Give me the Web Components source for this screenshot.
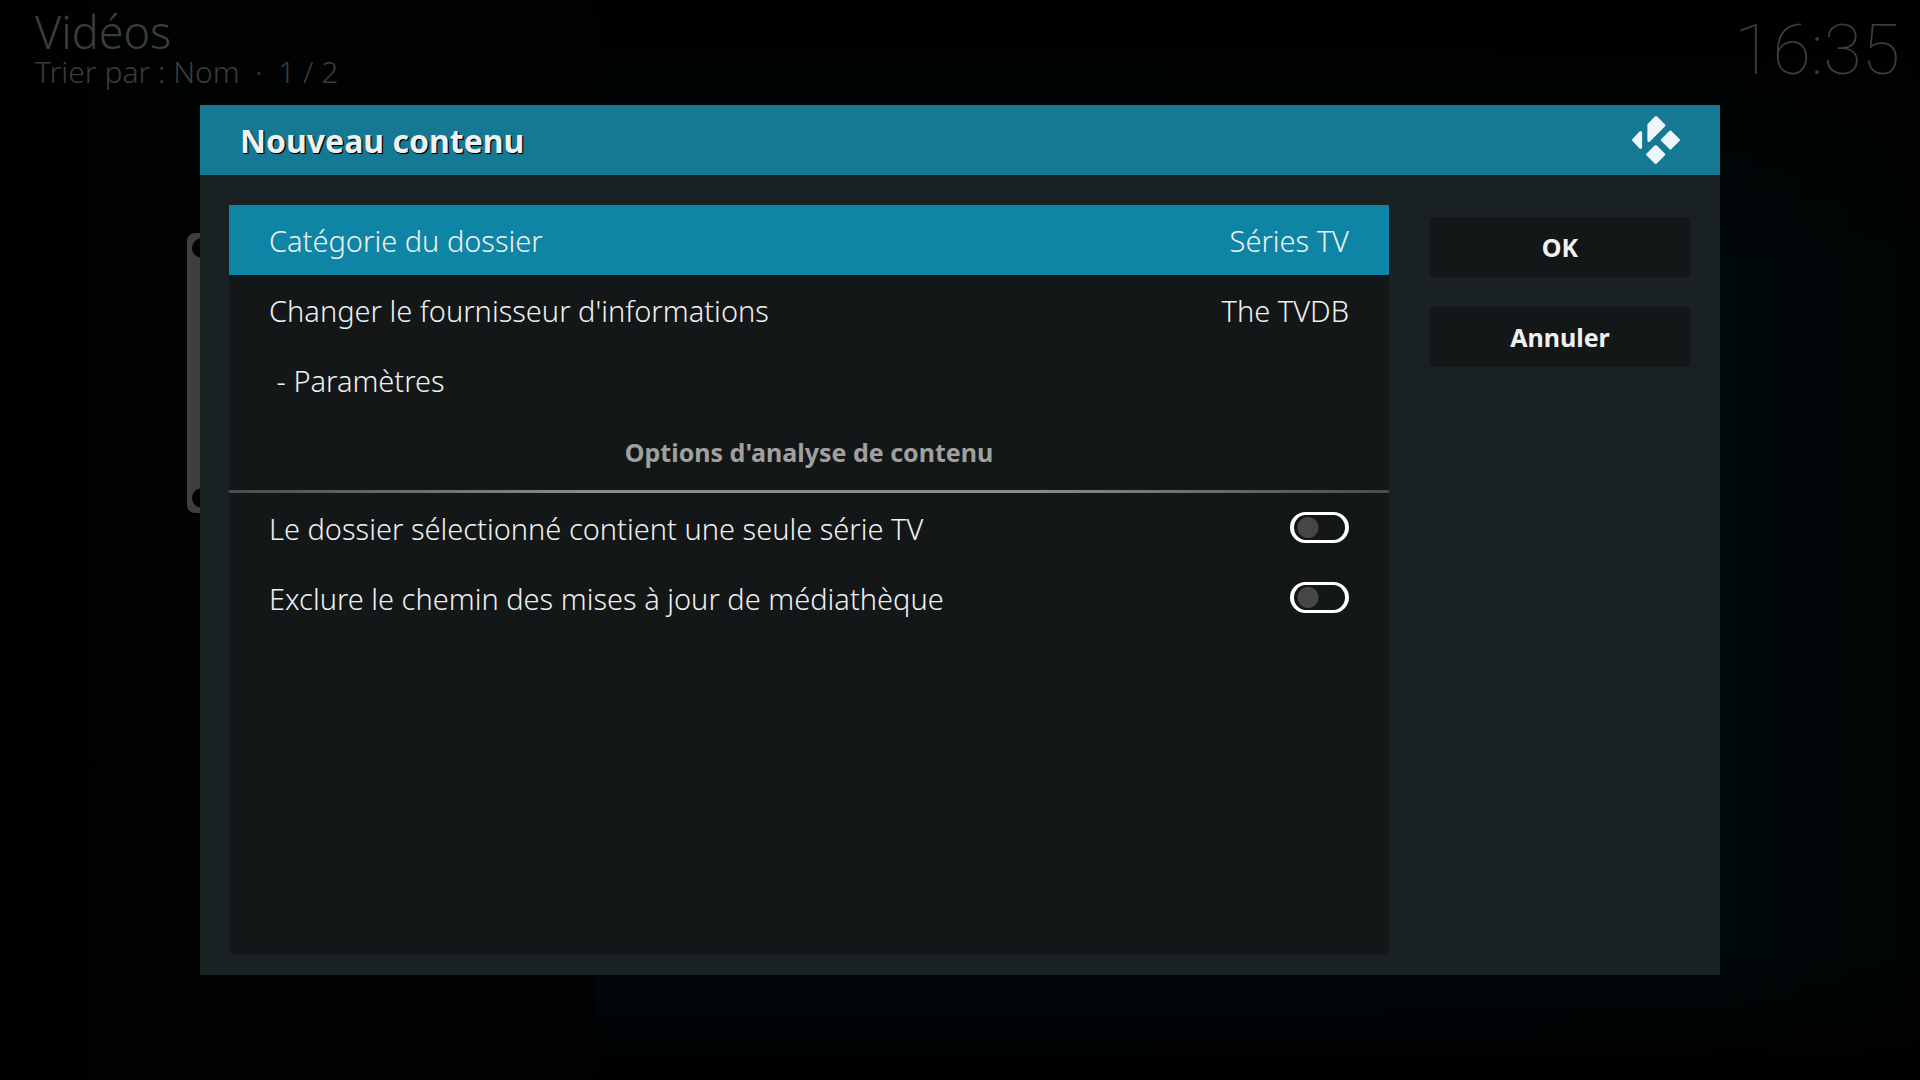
<!DOCTYPE html>
<html lang="fr">
<head>
<meta charset="utf-8">
<title>Nouveau contenu</title>
<style>
  html, body {
    height: 100%;
    margin: 0;
  }

  body {
    background: #000;
    color: #f0f0f0;
    font-family: "Noto Sans", "Open Sans", sans-serif;
    font-weight: 300;
    font-size: 29px;
    line-height: 40px;
  }
</style>
</head>
<body>

<media-window>
  <span slot="title">Vidéos</span>
  <span slot="details">Trier par : Nom &nbsp;·&nbsp; 1 / 2</span>
  <time slot="clock">16:35</time>

  <content-dialog slot="dialog" role="dialog" aria-label="Nouveau contenu">
    <span slot="heading">Nouveau contenu</span>

    <setting-row selected>Catégorie du dossier<span slot="value">Séries TV</span></setting-row>
    <setting-row>Changer le fournisseur d'informations<span slot="value">The TVDB</span></setting-row>
    <setting-row>&nbsp;- Paramètres</setting-row>
    <setting-group>Options d'analyse de contenu</setting-group>
    <setting-toggle>Le dossier sélectionné contient une seule série TV</setting-toggle>
    <setting-toggle>Exclure le chemin des mises à jour de médiathèque</setting-toggle>

    <dialog-button slot="actions">OK</dialog-button>
    <dialog-button slot="actions">Annuler</dialog-button>
  </content-dialog>
</media-window>

<template id="media-window">
  <style>
    :host {
      display: flex;
      flex-direction: column;
      position: relative;
      min-height: 100%;
      background:
        linear-gradient(90deg, #000 0, #010303 12%, #010202 31%, transparent 31%),
        linear-gradient(#000, transparent 25%, transparent 88%, #000),
        linear-gradient(90deg, #00090d 60%, #00080a 90%, #010404);
    }

    header {
      display: flex;
      justify-content: space-between;
      padding: 8px 20px 0 35px;
      color: #3c3c3c;
    }

    h1 {
      margin: 0;
      font-size: 45px;
      font-weight: 300;
      line-height: 48px;
    }

    p {
      margin: 0;
      font-size: 30px;
      line-height: 32px;
    }

    .clock {
      padding-top: 4px;
      font-family: Roboto, sans-serif;
      font-size: 70px;
      font-weight: 100;
      line-height: 76px;
    }

    .folder {
      width: 280px;
      height: 280px;
      margin: 145px 0 0 187px;
    }

    .layer {
      position: absolute;
      inset: 0;
      display: flex;
      padding: 105px 200px;
    }

    ::slotted(content-dialog) {
      flex: 1;
    }
  </style>

  <header>
    <div>
      <h1><slot name="title"></slot></h1>
      <p><slot name="details"></slot></p>
    </div>
    <div class="clock"><slot name="clock"></slot></div>
  </header>

  <svg class="folder" viewBox="0 0 280 280" aria-hidden="true">
    <rect width="280" height="280" rx="8" fill="#3e3e3e"/>
    <g fill="#020303">
      <circle cx="15" cy="15" r="10"/>
      <circle cx="15" cy="265" r="10"/>
      <circle cx="265" cy="15" r="10"/>
      <circle cx="265" cy="265" r="10"/>
    </g>
  </svg>

  <div class="layer"><slot name="dialog"></slot></div>
</template>

<template id="content-dialog">
  <style>
    :host {
      display: flex;
      flex-direction: column;
      background: #1a2123;
    }

    header {
      display: flex;
      align-items: center;
      justify-content: space-between;
      height: 70px;
      padding: 0 40px;
      background: #157994;
    }

    h2 {
      margin: 0;
      padding-top: 2px;
      font-size: 32px;
      font-weight: 700;
      text-shadow: 1px 1px 1px #000, 1px 1px 0 #000;
    }

    svg {
      width: 48px;
      height: 48px;
      fill: #eef6f9;
      stroke: #eef6f9;
      stroke-width: 3;
      stroke-linejoin: round;
    }

    .body {
      flex: 1;
      display: flex;
      gap: 41px;
      padding: 30px 30px 20px 29px;
    }

    .settings {
      flex: 1;
      background: #141718;
      border-radius: 0 0 6px 6px;
    }

    .actions {
      display: flex;
      flex-direction: column;
      gap: 30px;
      width: 260px;
      padding-top: 12px;
    }
  </style>

  <header>
    <h2><slot name="heading"></slot></h2>
    <svg viewBox="0 0 48 48" aria-hidden="true">
      <path d="M24 1.6 31.8 9.4 16.9 24.4V8.7z"/>
      <path d="M1.6 24 8.6 16.6V31.4z"/>
      <path d="M38.4 16 46.4 24 38.4 32 30.4 24z"/>
      <path d="M23.7 30.5 31.7 38.5 23.7 46.5 15.7 38.5z"/>
    </svg>
  </header>
  <div class="body">
    <div class="settings"><slot></slot></div>
    <div class="actions"><slot name="actions"></slot></div>
  </div>
</template>

<template id="setting-row">
  <style>
    :host {
      display: block;
    }

    button {
      display: flex;
      align-items: center;
      justify-content: space-between;
      width: 100%;
      height: 70px;
      padding: 2px 40px 0;
      border: 0;
      background: none;
      color: inherit;
      font: inherit;
      text-align: left;
    }

    :host([selected]) button {
      background: #0f85a5;
    }
  </style>

  <button type="button">
    <span><slot></slot></span>
    <slot name="value"></slot>
  </button>
</template>

<template id="setting-group">
  <style>
    :host {
      display: block;
    }

    h3 {
      margin: 0;
      padding: 17px 40px 18px;
      border-bottom: 3px solid;
      border-image: linear-gradient(90deg, #4b4b4d, #8a8a8a 30%, #8a8a8a 70%, #4b4b4d) 1;
      color: #a0a0a0;
      font-size: 25px;
      font-weight: 700;
      text-align: center;
    }
  </style>

  <h3><slot></slot></h3>
</template>

<template id="setting-toggle">
  <style>
    :host {
      display: block;
    }

    label {
      display: flex;
      align-items: center;
      justify-content: space-between;
      box-sizing: border-box;
      height: 70px;
      padding: 0 40px 1px;
    }

    span {
      padding-top: 3px;
    }

    input {
      appearance: none;
      flex: none;
      box-sizing: border-box;
      width: 59px;
      height: 31px;
      margin: 0;
      border: 3px solid #fff;
      border-width: 3px 4px;
      border-radius: 16px;
      background: radial-gradient(circle at 14px 50%, #464648 10px, transparent 11px);
    }

    input:checked {
      background: radial-gradient(circle at 37px 50%, #0f85a5 10px, transparent 11px);
    }
  </style>

  <label>
    <span><slot></slot></span>
    <input type="checkbox">
  </label>
</template>

<template id="dialog-button">
  <style>
    :host {
      display: block;
    }

    button {
      width: 100%;
      height: 60px;
      padding: 0;
      border: 0;
      border-radius: 4px;
      background: #141718;
      color: inherit;
      font: inherit;
      font-size: 25px;
      font-weight: 700;
    }
  </style>

  <button type="button"><slot></slot></button>
</template>

<script>
  class TemplateElement extends HTMLElement {
    constructor() {
      super();

      const template = document.getElementById(this.localName);
      this.attachShadow({ mode: "open" });
      this.shadowRoot.appendChild(template.content.cloneNode(true));
    }
  }

  customElements.define("media-window", class extends TemplateElement {});

  customElements.define(
    "content-dialog",
    class extends TemplateElement {
      connectedCallback() {
        // only one row is highlighted at a time
        this.addEventListener("click", (event) => {
          const row = event.target.closest("setting-row");
          if (row) {
            this.querySelectorAll("setting-row").forEach((item) => {
              item.toggleAttribute("selected", item === row);
            });
          }
        });
      }
    }
  );

  customElements.define("setting-row", class extends TemplateElement {});
  customElements.define("setting-group", class extends TemplateElement {});
  customElements.define("setting-toggle", class extends TemplateElement {});
  customElements.define("dialog-button", class extends TemplateElement {});
</script>
</body>
</html>
